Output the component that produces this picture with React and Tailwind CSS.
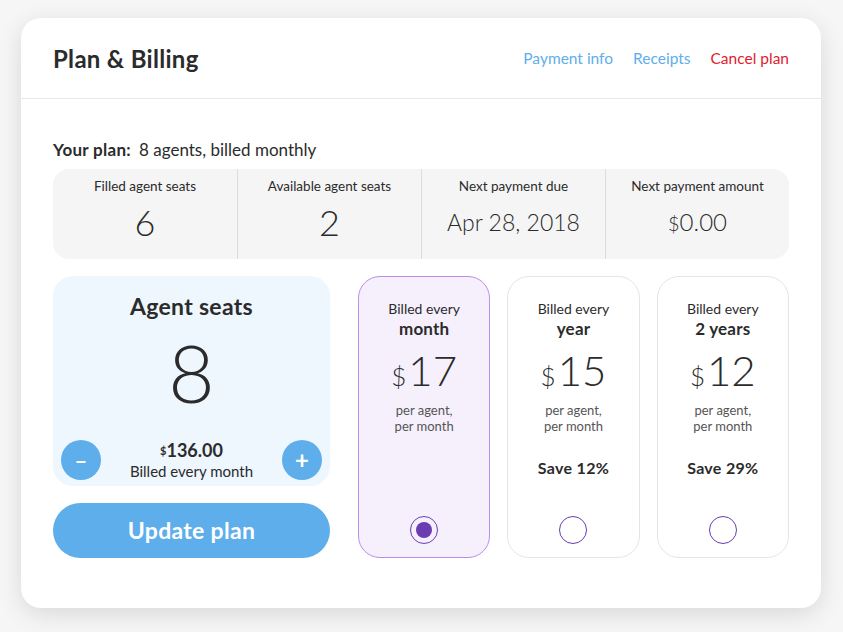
import React, { useState } from 'react';

const stats = [
    { label: 'Filled agent seats', value: '6' },
    { label: 'Available agent seats', value: '2' },
    { label: 'Next payment due', value: 'Apr 28, 2018' },
    { label: 'Next payment amount', value: '0.00', currency: true },
];

const plans = [
    { id: 'month', period: 'month', price: 17, save: null },
    { id: 'year', period: 'year', price: 15, save: 'Save 12%' },
    { id: '2years', period: '2 years', price: 12, save: 'Save 29%' },
];

const PlanCard = ({ plan, selected, onSelect }) => (
    <div
        onClick={onSelect}
        className={`flex flex-col items-center rounded-[22px] border pt-[23px] pb-[13px] cursor-pointer ${
            selected ? 'bg-[#f6f0fd] border-[#bb8ee9]' : 'bg-white border-[#e9e3e7]'
        }`}
    >
        <div className="text-[14px] leading-[18px] text-[#2b2b2b]">Billed every</div>
        <div className="text-[17px] leading-[21px] font-bold text-[#2b2b2b] tracking-[0.2px]">{plan.period}</div>
        <div className="flex items-baseline mt-[5px] text-[#2b2b2b] font-light">
            <span className="text-[26px] leading-none mr-[2px]">$</span>
            <span className="text-[42px] leading-[52px]">{plan.price}</span>
        </div>
        <div className="mt-[6px] text-[13px] leading-[16px] text-[#555] text-center">
            per agent,
            <br />
            per month
        </div>
        {plan.save && (
            <div className="mt-[22px] text-[16px] font-bold text-[#2b2b2b] tracking-[0.3px]">{plan.save}</div>
        )}
        <div className="mt-auto w-[28px] h-[28px] rounded-full border border-[#6b3db3] flex items-center justify-center">
            {selected && <div className="w-[16px] h-[16px] rounded-full bg-[#6b3db3]" />}
        </div>
    </div>
);

export default function App() {
    const [seats, setSeats] = useState(8);
    const [selected, setSelected] = useState('month');

    return (
        <div
            className="min-h-screen bg-[#f6f6f6] pt-[18px] pl-[21px]"
            style={{ fontFamily: 'Lato, "Open Sans", sans-serif' }}
        >
            <div className="w-[800px] h-[590px] bg-white rounded-[20px] shadow-[0_6px_24px_rgba(0,0,0,0.12)]">
                {/* header */}
                <div className="h-[81px] flex items-center justify-between px-[32px] border-b border-[#ece6e8]">
                    <h1 className="text-[24px] font-bold text-[#2b2b2b] pt-[2px] tracking-[0.3px]">Plan &amp; Billing</h1>
                    <div className="flex gap-[20px] text-[15.5px] pt-[2px]">
                        <a className="text-[#5eaeeb]" href="#">Payment info</a>
                        <a className="text-[#5eaeeb]" href="#">Receipts</a>
                        <a className="text-[#e0202f]" href="#">Cancel plan</a>
                    </div>
                </div>

                <div className="px-[32px] pt-[40px]">
                    <div className="text-[17px] text-[#2b2b2b] leading-[22px]">
                        <span className="font-bold tracking-[0.3px]">Your plan:</span>
                        <span className="ml-[8px]">8 agents, billed monthly</span>
                    </div>

                    {/* stats */}
                    <div className="mt-[8px] h-[90px] bg-[#f5f5f5] rounded-[16px] grid grid-cols-4">
                        {stats.map((s, i) => (
                            <div
                                key={s.label}
                                className={`flex flex-col items-center pt-[7px] ${i > 0 ? 'border-l border-[#dcdcdc]' : ''}`}
                            >
                                <div className="text-[13.5px] text-[#2b2b2b]">{s.label}</div>
                                <div className="mt-[6px] text-[#2b2b2b] font-light leading-[40px]">
                                    {s.currency && <span className="text-[20px]">$</span>}
                                    <span className={s.currency ? 'text-[24px]' : s.value.length > 2 ? 'text-[23px]' : 'text-[36px]'}>
                                        {s.value}
                                    </span>
                                </div>
                            </div>
                        ))}
                    </div>

                    {/* lower */}
                    <div className="mt-[17px] flex gap-[28px]">
                        <div className="w-[277px] flex flex-col">
                            <div className="h-[210px] rounded-[20px] bg-[#eef6fe] flex flex-col items-center pt-[16px] pb-[5px]">
                                <div className="text-[23px] font-bold text-[#2b2b2b] leading-[28px] tracking-[0.3px]">Agent seats</div>
                                <div className="text-[80px] font-light leading-[90px] text-[#2b2b2b] mt-[7px]">{seats}</div>
                                <div className="mt-auto w-full flex items-center justify-between px-[8px]">
                                    <button
                                        onClick={() => setSeats(Math.max(1, seats - 1))}
                                        className="w-[40px] h-[40px] rounded-full bg-[#5eaeeb] text-white text-[22px] font-bold flex items-center justify-center"
                                    >
                                        –
                                    </button>
                                    <div className="text-center text-[#2b2b2b]">
                                        <div className="font-bold text-[18px] leading-[22px]">
                                            <sup className="text-[11px] relative -top-[2px]">$</sup>
                                            {(seats * 17).toFixed(2)}
                                        </div>
                                        <div className="text-[15px] leading-[20px]">Billed every month</div>
                                    </div>
                                    <button
                                        onClick={() => setSeats(seats + 1)}
                                        className="w-[40px] h-[40px] rounded-full bg-[#5eaeeb] text-white text-[24px] font-bold flex items-center justify-center"
                                    >
                                        +
                                    </button>
                                </div>
                            </div>
                            <button className="mt-[17px] h-[55px] rounded-full bg-[#5eaeeb] text-white text-[23px] font-bold tracking-[0.3px]">
                                Update plan
                            </button>
                        </div>

                        <div className="flex-1 h-[282px] grid grid-cols-3 gap-[17px]">
                            {plans.map(p => (
                                <PlanCard
                                    key={p.id}
                                    plan={p}
                                    selected={selected === p.id}
                                    onSelect={() => setSelected(p.id)}
                                />
                            ))}
                        </div>
                    </div>
                </div>
            </div>
        </div>
    );
}
